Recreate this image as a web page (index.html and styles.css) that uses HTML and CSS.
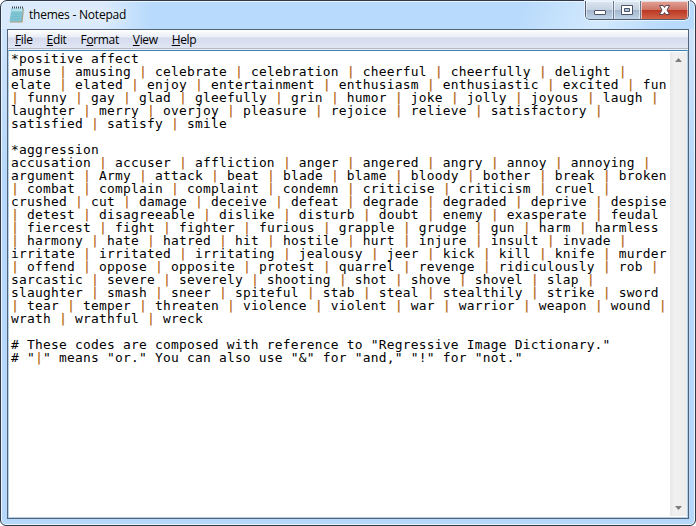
FILE: index.html
```html
<!DOCTYPE html>
<html lang="en">
<head>
<meta charset="utf-8">
<title>themes - Notepad</title>
<link rel="stylesheet" href="styles.css">
</head>
<body>
<div class="window">
  <header class="titlebar">
    <svg class="app-icon" width="16" height="17" viewBox="0 0 16 17">
      <path d="M3 2.500h12l-1.500 14H1z" fill="#a99d80"/>
      <path d="M2.500 2H14l-1.500 13.500H.5z" fill="#7fc4d3"/>
      <path d="M3 2h10.500l-.4 4H2.600z" fill="#b5e2ea"/>
      <path d="M3 5.500h9.500M2.500 8h9.500M2.200 10.500h9.500M2 13h9.500" stroke="#69b4c5" stroke-width=".5"/>
      <path d="M3 1.500h11" stroke="#3d4c51" stroke-width="2" stroke-dasharray="1 1"/>
    </svg>
    <span class="caption">themes - Notepad</span>
    <div class="controls">
      <span class="btn min"><svg width="27" height="19"><rect x="8.500" y="9.500" width="11" height="4" rx=".5" fill="#fff" stroke="#4d5567"/></svg></span>
      <span class="btn max"><svg width="26" height="19"><path d="M7.500 4.500h11v9h-11z" fill="#fff" stroke="#4d5567"/><path d="M10.500 7.500h5v3h-5z" fill="#a9c4df" stroke="#4d5567"/></svg></span>
      <span class="btn close"><svg width="47" height="19"><path d="M18.500 4.500h3.700l1.300 2 1.300-2h3.700l-2.500 4.500 2.500 4.500h-3.700l-1.300-2-1.300 2h-3.700l2.500-4.500z" fill="#fff" stroke="#5a4550"/></svg></span>
    </div>
  </header>
  <main class="client">
    <nav class="menu">
      <span><u>F</u>ile</span><span><u>E</u>dit</span><span>F<u>o</u>rmat</span><span><u>V</u>iew</span><span><u>H</u>elp</span>
    </nav>
    <div class="editor">
<pre class="text" id="text">*positive affect
amuse | amusing | celebrate | celebration | cheerful | cheerfully | delight |
elate | elated | enjoy | entertainment | enthusiasm | enthusiastic | excited | fun
| funny | gay | glad | gleefully | grin | humor | joke | jolly | joyous | laugh |
laughter | merry | overjoy | pleasure | rejoice | relieve | satisfactory |
satisfied | satisfy | smile

*aggression
accusation | accuser | affliction | anger | angered | angry | annoy | annoying |
argument | Army | attack | beat | blade | blame | bloody | bother | break | broken
| combat | complain | complaint | condemn | criticise | criticism | cruel |
crushed | cut | damage | deceive | defeat | degrade | degraded | deprive | despise
| detest | disagreeable | dislike | disturb | doubt | enemy | exasperate | feudal
| fiercest | fight | fighter | furious | grapple | grudge | gun | harm | harmless
| harmony | hate | hatred | hit | hostile | hurt | injure | insult | invade |
irritate | irritated | irritating | jealousy | jeer | kick | kill | knife | murder
| offend | oppose | opposite | protest | quarrel | revenge | ridiculously | rob |
sarcastic | severe | severely | shooting | shot | shove | shovel | slap |
slaughter | smash | sneer | spiteful | stab | steal | stealthily | strike | sword
| tear | temper | threaten | violence | violent | war | warrior | weapon | wound |
wrath | wrathful | wreck

# These codes are composed with reference to "Regressive Image Dictionary."
# "|" means "or." You can also use "&amp;" for "and," "!" for "not."</pre>
      <div class="scrollbar">
        <svg width="7" height="4"><path d="M0 4L3.500 0 7 4z" fill="#7c7c7c"/></svg>
        <svg width="7" height="4"><path d="M0 0h7L3.500 4z" fill="#7c7c7c"/></svg>
      </div>
    </div>
  </main>
</div>
<script src="script.js"></script>
</body>
</html>
```
FILE: styles.css
```css
* { box-sizing: border-box; }
body { margin: 0; width: 696px; height: 526px; overflow: hidden; background: #fff; }
.window {
  width: 696px; height: 526px;
  display: flex; flex-direction: column;
  padding: 0 6px 6px;
  border: 1px solid #30384a;
  border-radius: 7px 7px 6px 6px;
  background:
    linear-gradient(115deg, transparent 74%, #d3e9fc 86%, transparent 96%) 0 0 / 100% 28px no-repeat,
    linear-gradient(90deg, #d9eafc 0, #dcebfb 100px, #b8dafc 150px) 0 0 / 100% 28px no-repeat,
    linear-gradient(#cfe4fb 28px, #b6d8fa 170px);
  box-shadow: inset 0 0 0 1px #eaf6ff;
}
.titlebar { flex: 0 0 28px; display: flex; align-items: flex-start; padding-left: 2px; }
.app-icon { margin-top: 5px; }
.caption {
  margin: 5px 0 0 4px;
  font: 12px/17px "Open Sans", "Noto Sans", sans-serif;
  letter-spacing: -.22px; color: #000;
  text-shadow: 0 0 7px #fff;
}
.controls {
  display: flex; margin-left: auto; height: 19px; width: 104px;
  border: 1px solid #515c70; border-top: 0;
  border-radius: 0 0 5px 5px; overflow: hidden;
  box-shadow: 0 0 0 1px #e4f3ff;
}
.btn { display: block; height: 19px; background: linear-gradient(#dce6f0, #c6d3e2 45%, #a4b7cd 50%, #c3d8ec); box-shadow: inset 0 0 0 1px #ffffff90; }
.btn svg { display: block; }
.min { width: 28px; border-right: 1px solid #68788e; }
.max { width: 27px; border-right: 1px solid #68788e; }
.close { width: 47px; background: linear-gradient(#e2a398, #cf7566 45%, #ba3824 50%, #d5694c); }
.client { flex: 1; display: flex; flex-direction: column; border: 1px solid #536377; min-height: 0; background: #fff; }
.menu {
  flex: 0 0 20px; display: flex; gap: 14px; padding: 1px 0 0 7px;
  font: 12px/18px "Open Sans", "Noto Sans", sans-serif; letter-spacing: -.35px; color: #000;
  background: linear-gradient(#fff 0, #e9edf6 7px, #d5dbed 8px, #e1e6f5 18px, #b4bac8 18px, #b4bac8 19px, #f0f0f0 19px);
}
.menu u { text-underline-offset: 1px; text-decoration-thickness: 1px; }
.editor { flex: 1; display: flex; min-height: 0; border: 1px solid #b5cfe7; border-top-color: #3780b8; }
.text {
  flex: 1; margin: 0; padding: 1px 0 0 2px; overflow: hidden;
  font: 12.9px/13px "DejaVu Sans Mono", monospace; letter-spacing: .234px; color: #000;
}
.bar { color: #b87020; text-shadow: .4px 0 #b8702090; }
.scrollbar {
  flex: 0 0 17px; margin: 1px 0; background: linear-gradient(90deg, #e6e6e6, #f0f0f0 4px, #ededed);
  display: flex; flex-direction: column; align-items: center; justify-content: space-between; padding: 6px 0;
}
```
FILE: script.js
```js
// Tint the separators between words.
const text = document.getElementById("text");
text.innerHTML = text.innerHTML.replace(/\|/g, '<span class="bar">|</span>');
```
